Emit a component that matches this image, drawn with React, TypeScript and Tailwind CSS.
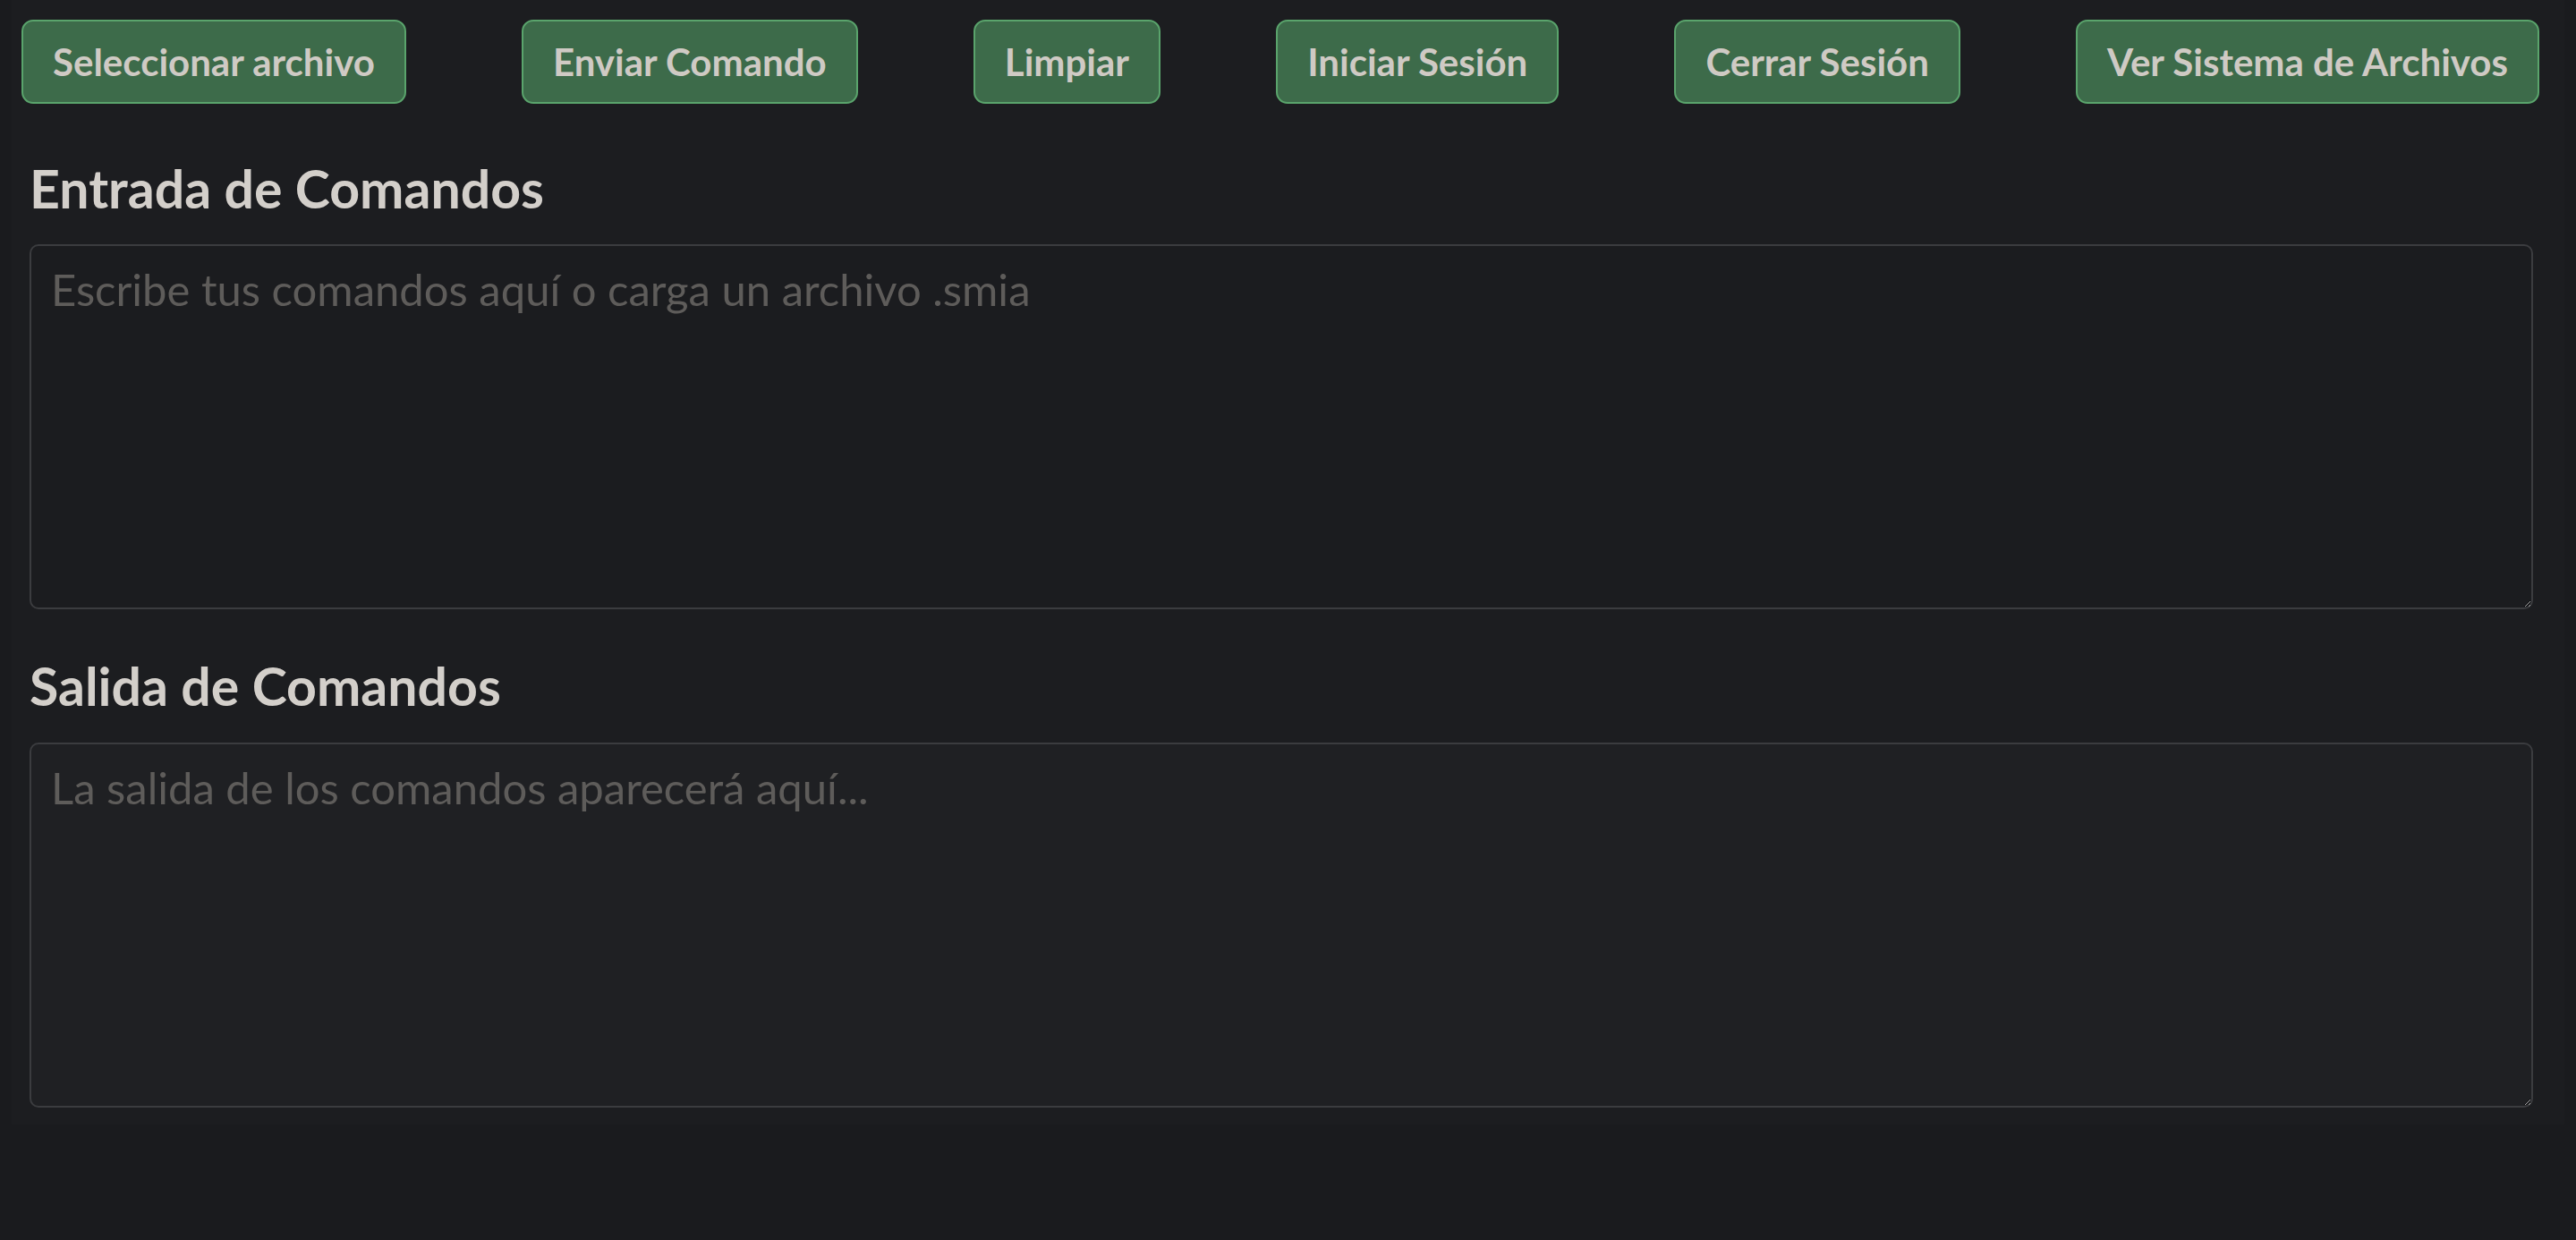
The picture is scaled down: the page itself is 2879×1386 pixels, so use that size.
import React from "react";

const actions = [
  "Seleccionar archivo",
  "Enviar Comando",
  "Limpiar",
  "Iniciar Sesión",
  "Cerrar Sesión",
  "Ver Sistema de Archivos",
];

const App = () => {
  return (
    <div className="min-h-screen bg-[#1a1b1e] font-['Lato',sans-serif] [color-scheme:dark]">
      <div className="ml-[13px] mr-[13px] bg-[#1c1d20] pt-[22px] pb-[19px]">
        <div className="flex justify-between pl-[11px] pr-[28px]">
          {actions.map((label) => (
            <button
              key={label}
              className="h-[94px] px-[33px] rounded-[13px] border-2 border-[#5aa46c] bg-[#3d6b4a] text-[42px] font-bold text-[#cfcac4] leading-none"
            >
              {label}
            </button>
          ))}
        </div>

        <div className="pl-[20px] pr-[35px]">
          <h2 className="mt-[65px] text-[59px] leading-none font-bold text-[#d3cfca]">
            Entrada de Comandos
          </h2>
          <textarea
            placeholder="Escribe tus comandos aquí o carga un archivo .smia"
            className="mt-[33px] block w-full h-[408px] rounded-[10px] border-2 border-[#3b3c3f] bg-[#1b1c1f] px-[22px] pt-[16px] text-[49px] leading-[64px] text-[#d3cfca] placeholder:text-[#5e5c5a] outline-none"
          />

          <h2 className="mt-[56px] text-[59px] leading-none font-bold text-[#d3cfca]">
            Salida de Comandos
          </h2>
          <textarea
            readOnly
            placeholder="La salida de los comandos aparecerá aquí..."
            className="mt-[34px] block w-full h-[408px] rounded-[10px] border-2 border-[#3b3c3f] bg-[#1f2023] px-[22px] pt-[16px] text-[49px] leading-[64px] text-[#d3cfca] placeholder:text-[#5e5c5a] outline-none"
          />
        </div>
      </div>
    </div>
  );
};

export default App;
